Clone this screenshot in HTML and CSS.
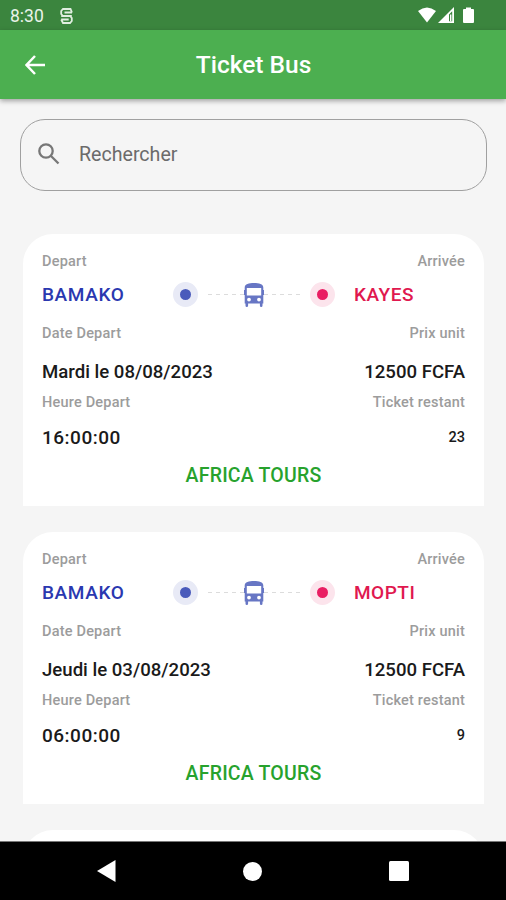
FILE: index.html
```html
<!DOCTYPE html>
<html lang="fr">
<head>
  <meta charset="UTF-8">
  <meta name="viewport" content="width=device-width, initial-scale=1.0">
  <title>Ticket Bus</title>
  <link rel="stylesheet" href="styles.css">
</head>
<body>

  <svg class="sprite" width="0" height="0">
    <symbol id="bus" viewBox="0 0 20 24">
      <path fill-rule="evenodd" d="M.7 4.500C.7 1 5 0 10 0s9.300 1 9.300 4.500V7h.7v5h-.7v8.500h-.8V22.500q0 1.500-1.300 1.500t-1.300-1.500v-2H4.100v2q0 1.500-1.300 1.500t-1.300-1.500v-2H.7V12H0V7h.7zM2.800 5v7.500h14.400V5zM5 14.700a1.900 1.900 0 1 0 0 3.800 1.900 1.900 0 0 0 0-3.800zm10 0a1.900 1.900 0 1 0 0 3.800 1.900 1.900 0 0 0 0-3.800z"/>
    </symbol>
  </svg>

  <div class="screen">
    <div class="status-bar">
      <span class="time">8:30</span>
      <svg class="app-icon" width="13" height="16" viewBox="0 0 13 16">
        <path d="M12 4.500L10.500 1H3L1.200 3v3L3 8h7l1.800 2v3L10 15H3L1.200 11.500M1.200 8H11.800M4.500 4.500H12M1.200 11.500h7.500"/>
      </svg>
      <svg class="status-icons" width="56" height="17" viewBox="0 0 56 17">
        <path d="M0 4Q9 -3 18 4L9 15.500z"/>
        <path fill-rule="evenodd" d="M20 16L36 0v16zM31 7.500V14.300h3.200V4.300z"/>
        <path d="M32 7.500h1.400v6.800H32z"/>
        <path d="M46 2H48V.500h5V2h2q1 0 1 1v12q0 1-1 1h-9q-1 0-1-1V3q0-1 1-1z"/>
      </svg>
    </div>

    <div class="header">
      <svg class="back" width="20" height="20" viewBox="0 0 20 20">
        <path d="M20 10H1.500M10 1L1.500 10l8.500 9"/>
      </svg>
      <h1>Ticket Bus</h1>
    </div>

    <div class="content">
      <div class="search-bar">
        <svg width="22" height="22" viewBox="0 0 22 22">
          <circle cx="8" cy="8" r="6.700"/>
          <path d="M13 13l7.500 7.500"/>
        </svg>
        <span>Rechercher</span>
      </div>

      <div class="tickets">
        <div class="ticket">
          <div class="row label"><span>Depart</span><span>Arrivée</span></div>
          <div class="route">
            <span class="from">BAMAKO</span>
            <div class="line">
              <span class="dot dot-from"></span>
              <span class="dashes"></span>
              <svg class="bus" width="20" height="24"><use href="#bus"/></svg>
              <span class="dashes"></span>
              <span class="dot dot-to"></span>
            </div>
            <span class="to">KAYES</span>
          </div>
          <div class="row label date-label"><span>Date Depart</span><span>Prix unit</span></div>
          <div class="row value"><span>Mardi le 08/08/2023</span><span>12500 FCFA</span></div>
          <div class="row label hour-label"><span>Heure Depart</span><span>Ticket restant</span></div>
          <div class="row value hour"><span>16:00:00</span><span class="left">23</span></div>
          <div class="company">AFRICA TOURS</div>
        </div>

        <div class="ticket">
          <div class="row label"><span>Depart</span><span>Arrivée</span></div>
          <div class="route">
            <span class="from">BAMAKO</span>
            <div class="line">
              <span class="dot dot-from"></span>
              <span class="dashes"></span>
              <svg class="bus" width="20" height="24"><use href="#bus"/></svg>
              <span class="dashes"></span>
              <span class="dot dot-to"></span>
            </div>
            <span class="to">MOPTI</span>
          </div>
          <div class="row label date-label"><span>Date Depart</span><span>Prix unit</span></div>
          <div class="row value"><span>Jeudi le 03/08/2023</span><span>12500 FCFA</span></div>
          <div class="row label hour-label"><span>Heure Depart</span><span>Ticket restant</span></div>
          <div class="row value hour"><span>06:00:00</span><span class="left">9</span></div>
          <div class="company">AFRICA TOURS</div>
        </div>

        <div class="ticket"></div>
      </div>
    </div>

    <div class="nav-bar">
      <svg width="19" height="22" viewBox="0 0 19 22"><path d="M0 11L18.500 0v22z"/></svg>
      <svg width="19" height="19" viewBox="0 0 19 19"><circle cx="9.500" cy="9.500" r="9.500"/></svg>
      <svg width="20" height="20" viewBox="0 0 20 20"><rect width="20" height="20" rx="1.500"/></svg>
    </div>
  </div>

</body>
</html>
```
FILE: styles.css
```css
/* General Styles */
* {
  box-sizing: border-box;
  margin: 0;
  padding: 0;
}

body {
  font-family: Roboto, "Liberation Sans", sans-serif;
  background-color: #f5f5f5;
}

svg {
  display: block;
  flex: none;
}

.sprite {
  position: absolute;
}

.screen {
  display: flex;
  flex-direction: column;
  height: 900px;
  overflow: hidden;
}

/* Status Bar */
.status-bar {
  display: flex;
  align-items: center;
  height: 30px;
  flex: none;
  padding: 1px 32px 0 10px;
  background-color: #3b853e;
  color: #e9f3e9;
}

.time {
  width: 50px;
  font-size: 17.5px;
}

.app-icon {
  fill: none;
  stroke: #e0eee0;
  stroke-width: 1.8;
}

.status-icons {
  margin-left: auto;
  fill: #fff;
}

/* Header */
.header {
  display: flex;
  align-items: center;
  height: 69px;
  flex: none;
  padding: 0 25px;
  background-color: #4caf50;
  color: #fff;
  box-shadow: 0 2px 5px rgba(0, 0, 0, 0.35);
  z-index: 1;
}

.header h1 {
  flex: 1;
  padding-right: 19px;
  text-align: center;
  font-size: 24.5px;
  font-weight: 500;
}

.back {
  fill: none;
  stroke: #fff;
  stroke-width: 2.5;
}

/* Content */
.content {
  flex: 1;
  min-height: 0;
  overflow: hidden;
  padding: 20px 19px 0 20px;
}

.search-bar {
  display: flex;
  align-items: center;
  gap: 19px;
  height: 72px;
  padding: 0 0 2px 17px;
  border: 1px solid #a0a0a0;
  border-radius: 25px;
  color: #6b6b6b;
  font-size: 19.6px;
}

.search-bar svg {
  fill: none;
  stroke: #777;
  stroke-width: 2.3;
}

/* Tickets */
.tickets {
  display: flex;
  flex-direction: column;
  gap: 26px;
  padding: 43px 3px 0;
}

.ticket {
  height: 272px;
  flex: none;
  padding: 17px 19px 0;
  background-color: #fff;
  border-radius: 30px 30px 0 0;
  font-weight: 500;
}

.row {
  display: flex;
  align-items: center;
  justify-content: space-between;
}

.label {
  height: 20px;
  font-size: 14.5px;
  letter-spacing: 0.2px;
  color: #9c9c9c;
}

.date-label {
  height: 30px;
}

.hour-label {
  height: 12px;
}

.value {
  height: 48px;
  font-size: 18.6px;
  color: #1a1a1a;
}

.hour {
  height: 58px;
  font-size: 19px;
  letter-spacing: 0.5px;
}

.left {
  font-size: 14.5px;
  letter-spacing: 0;
}

.route {
  display: grid;
  grid-template-columns: 131px 162px 1fr;
  align-items: center;
  height: 47px;
  font-size: 19px;
}

.from {
  letter-spacing: 0.6px;
  color: #2a38b0;
}

.to {
  padding-left: 19px;
  letter-spacing: 0.5px;
  color: #e0184f;
}

.line {
  display: flex;
  align-items: center;
  justify-content: space-between;
}

.dot {
  width: 25px;
  height: 25px;
  border-radius: 50%;
  border: 7.5px solid #e8eaf6;
  background-color: #4a5bbb;
}

.dot-to {
  border-color: #fce4ec;
  background-color: #e91e63;
}

.dashes {
  width: 36px;
  height: 1px;
  background: repeating-linear-gradient(to right, #dcdcdc 0 4px, transparent 4px 8px);
}

.bus {
  margin: 0 -10px;
  fill: #6776c4;
}

.company {
  height: 18px;
  line-height: 20px;
  text-align: center;
  font-size: 19.5px;
  letter-spacing: 0.2px;
  color: #27a22d;
}

/* Navigation Bar */
.nav-bar {
  display: flex;
  align-items: center;
  justify-content: space-between;
  height: 59px;
  flex: none;
  padding: 0 97px;
  background-color: #000;
  border-top: 1px solid #777;
  fill: #fff;
}
```
